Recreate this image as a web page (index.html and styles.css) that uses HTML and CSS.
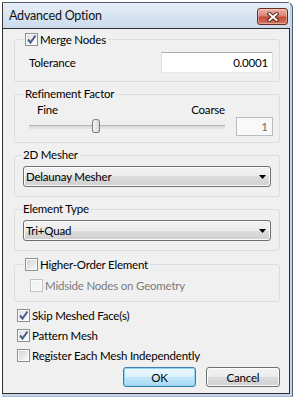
FILE: index.html
```html
<!DOCTYPE html>
<html>
<head>
  <title>Advanced Option</title>
  <link rel="stylesheet" href="styles.css">
</head>
<body>
  <div class="window">
    <div class="titlebar">
      <span class="title">Advanced Option</span>
      <button class="close-button">
        <svg width="12" height="10" viewBox="0 0 12 10">
          <path d="M2.5 2 L9.5 8 M9.5 2 L2.5 8" stroke="#5a2418" stroke-width="4" stroke-linecap="square"/>
          <path d="M2.5 2 L9.5 8 M9.5 2 L2.5 8" stroke="#fff" stroke-width="2" stroke-linecap="square"/>
        </svg>
      </button>
    </div>

    <div class="client">
      <fieldset class="group group-merge">
        <legend class="check-legend">
          <span class="checkbox checked"><svg width="11" height="11" viewBox="0 0 11 11"><path d="M2 5.5 L4.5 8.5 L9.5 1.5" stroke="#4a5d8f" stroke-width="2" fill="none"/></svg></span>
          Merge Nodes
        </legend>
        <div class="tolerance-row">
          <label for="tolerance">Tolerance</label>
          <input type="text" id="tolerance" class="textbox" value="0.0001">
        </div>
      </fieldset>

      <fieldset class="group group-refine">
        <legend>Refinement Factor</legend>
        <div class="refine-grid">
          <div class="scale-labels">
            <span>Fine</span>
            <span>Coarse</span>
          </div>
          <div class="slider">
            <div class="slider-track"></div>
            <div class="slider-thumb"></div>
          </div>
          <input type="text" class="factor-box" value="1">
        </div>
      </fieldset>

      <fieldset class="group group-combo">
        <legend class="plain-legend">2D Mesher</legend>
        <div class="combo">
          <span>Delaunay Mesher</span>
          <svg width="7" height="4" viewBox="0 0 7 4"><path d="M0 0 H7 L3.5 4 Z" fill="#000"/></svg>
        </div>
      </fieldset>

      <fieldset class="group group-combo">
        <legend class="plain-legend">Element Type</legend>
        <div class="combo">
          <span>Tri+Quad</span>
          <svg width="7" height="4" viewBox="0 0 7 4"><path d="M0 0 H7 L3.5 4 Z" fill="#000"/></svg>
        </div>
      </fieldset>

      <fieldset class="group group-higher">
        <legend class="check-legend">
          <span class="checkbox"></span>
          Higher-Order Element
        </legend>
        <div class="option disabled">
          <span class="checkbox"></span>
          Midside Nodes on Geometry
        </div>
      </fieldset>

      <div class="option first-option">
        <span class="checkbox checked"><svg width="11" height="11" viewBox="0 0 11 11"><path d="M2 5.5 L4.5 8.5 L9.5 1.5" stroke="#4a5d8f" stroke-width="2" fill="none"/></svg></span>
        Skip Meshed Face(s)
      </div>
      <div class="option">
        <span class="checkbox checked"><svg width="11" height="11" viewBox="0 0 11 11"><path d="M2 5.5 L4.5 8.5 L9.5 1.5" stroke="#4a5d8f" stroke-width="2" fill="none"/></svg></span>
        Pattern Mesh
      </div>
      <div class="option">
        <span class="checkbox"></span>
        Register Each Mesh Independently
      </div>

      <div class="buttons">
        <button class="dialog-button ok-button">OK</button>
        <button class="dialog-button cancel-button">Cancel</button>
      </div>
    </div>
  </div>
</body>
</html>
```

FILE: styles.css
```css
body {
  margin: 0;
  background: #fff;
  font-family: Lato, "Liberation Sans", sans-serif;
  font-size: 11.5px;
  letter-spacing: -0.2px;
  color: #000;
}

.window {
  margin: 2px 0 0 2px;
  width: 288px;
  border: 1px solid #4f5e70;
  border-left: none;
  border-bottom-color: #a9bdd6;
  border-radius: 0 6px 0 0;
  background: #c3d4e8;
  padding: 0 2px 2px 0;
}

.titlebar {
  height: 25px;
  display: flex;
  justify-content: space-between;
  align-items: flex-start;
  border-left: 1px solid #3a3a3a;
  background: linear-gradient(#e8eff8, #cadaed);
}

.title {
  font-size: 12.5px;
  line-height: 25px;
  padding-left: 6px;
  color: #111;
}

.close-button {
  margin: 5px 2px 0 0;
  width: 31px;
  height: 17px;
  padding: 0;
  border: 1px solid #6b2a20;
  border-radius: 3px;
  background: linear-gradient(#eab3a5 0%, #d98473 45%, #c44a36 55%, #d5775f 100%);
  box-shadow: inset 0 0 0 1px rgba(255, 255, 255, 0.35);
  display: flex;
  align-items: center;
  justify-content: center;
}

.client {
  height: 364px;
  display: flex;
  flex-direction: column;
  border: 1px solid #2e2e2e;
  background: #f0f0f0;
}

.group {
  margin: 5px 9px 0 11px;
  border: 1px solid #d5dfe5;
  border-radius: 3px;
  padding: 0 6px 8px 8px;
  min-inline-size: 0;
}

legend {
  padding: 0 2px;
  height: 14px;
  line-height: 14px;
}

.plain-legend {
  padding: 0 2px 0 0;
}

.check-legend {
  display: flex;
  align-items: center;
  gap: 2px;
  height: 15px;
}

.group-merge {
  margin-top: 3px;
  padding-top: 5px;
}

.group-refine {
  padding-top: 2px;
  padding-bottom: 6px;
}

.group-combo {
  padding-top: 4px;
  padding-bottom: 9px;
}

.group-higher {
  margin-top: 6px;
  padding-top: 6px;
}

.checkbox {
  box-sizing: border-box;
  width: 13px;
  height: 13px;
  flex: none;
  border: 1px solid #8e8f8f;
  background: linear-gradient(135deg, #cfcfcf 0%, #f6f6f6 85%);
  box-shadow: inset 0 0 0 1px #fbfbfb;
  display: flex;
  align-items: center;
  justify-content: center;
}

.checkbox.checked {
  background: linear-gradient(135deg, #dcdcdc 0%, #fbfbfb 85%);
}

.tolerance-row {
  display: flex;
  justify-content: space-between;
  align-items: center;
  padding-left: 6px;
}

.textbox {
  box-sizing: border-box;
  width: 112px;
  height: 21px;
  margin: 0;
  padding: 0 4px 0 0;
  border: 1px solid #e3e9ef;
  border-top-color: #abadb3;
  border-left-color: #dbdfe6;
  border-right-color: #dbdfe6;
  background: #fff;
  font: inherit;
  letter-spacing: inherit;
  text-align: right;
}

.refine-grid {
  display: grid;
  grid-template-columns: 196px 37px;
  grid-template-rows: 14px 19px;
  column-gap: 11px;
  padding-left: 6px;
}

.scale-labels {
  display: flex;
  justify-content: space-between;
  padding-left: 8px;
  line-height: 14px;
}

.slider {
  grid-row: 2;
  position: relative;
  display: flex;
  align-items: center;
}

.slider-track {
  width: 100%;
  height: 2px;
  border-top: 1px solid #b4b4b4;
  border-bottom: 1px solid #e4e4e4;
  background: #dedede;
}

.slider-thumb {
  position: absolute;
  left: 63px;
  top: 2px;
  box-sizing: border-box;
  width: 8px;
  height: 14px;
  border: 1px solid #7b7b7b;
  border-radius: 3px 3px 2px 2px;
  background: linear-gradient(90deg, #f4f4f4, #d8d8d8);
}

.factor-box {
  grid-row: 2;
  grid-column: 2;
  box-sizing: border-box;
  width: 37px;
  height: 19px;
  margin: 0;
  padding: 0 4px 0 0;
  border: 1px solid #b9bcc1;
  background: #f9f9f9;
  color: #6d6d6d;
  font: inherit;
  text-align: right;
}

.combo {
  box-sizing: border-box;
  width: 248px;
  height: 21px;
  display: flex;
  justify-content: space-between;
  align-items: center;
  padding: 0 4px 0 2px;
  border: 1px solid #707070;
  border-radius: 3px;
  background: linear-gradient(#f2f2f2 0%, #ebebeb 50%, #dddddd 50%, #cfcfcf 100%);
  box-shadow: inset 0 0 0 1px #fbfbfb;
}

.option {
  display: flex;
  align-items: center;
  gap: 2px;
  height: 15px;
  margin-top: 5px;
  padding-left: 14px;
}

.group .option {
  margin-top: 0;
  padding-left: 7px;
}

.option.disabled {
  color: #7b7b7b;
}

.option.disabled .checkbox {
  border-color: #c2c2c2;
  background: #f4f4f4;
}

.first-option {
  margin-top: 6px;
}

.buttons {
  display: flex;
  justify-content: flex-end;
  gap: 10px;
  margin-top: 4px;
  padding-right: 9px;
}

.dialog-button {
  height: 20px;
  padding: 0;
  border-radius: 3px;
  font: inherit;
  letter-spacing: inherit;
  color: #000;
}

.ok-button {
  width: 73px;
  border: 1px solid #3c7fb1;
  background: linear-gradient(#ecf7fd 0%, #dcf1fc 50%, #c2e7fc 50%, #a9daf5 100%);
  box-shadow: inset 0 0 0 1px #8fd3f5;
}

.cancel-button {
  width: 74px;
  border: 1px solid #707070;
  background: linear-gradient(#f2f2f2 0%, #ebebeb 50%, #dddddd 50%, #cfcfcf 100%);
  box-shadow: inset 0 0 0 1px #fcfcfc;
}
```
